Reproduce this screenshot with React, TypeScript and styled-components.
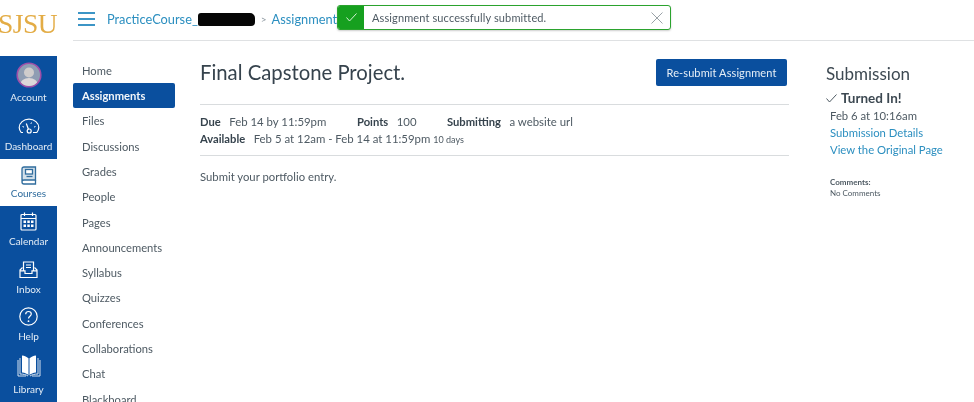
import { ReactNode } from "react";
import styled, { createGlobalStyle } from "styled-components";

const GlobalStyle = createGlobalStyle`
  html, body {
    margin: 0;
    padding: 0;
    background: #fff;
    font-family: Lato, "Open Sans", sans-serif;
    color: #2d3b45;
  }
  * { box-sizing: border-box; }
`;

const AccountIcon = () => (
  <svg width="26" height="26" viewBox="0 0 26 26">
    <defs>
      <clipPath id="avatar">
        <circle cx="13" cy="13" r="11" />
      </clipPath>
    </defs>
    <circle cx="13" cy="13" r="11.8" fill="#8f9db3" stroke="#a04fa8" strokeWidth="1.6" />
    <g clipPath="url(#avatar)">
      <circle cx="13" cy="10.5" r="5" fill="#cfcccc" />
      <ellipse cx="13" cy="23" rx="9" ry="7" fill="#dcd8d9" />
    </g>
  </svg>
);

const DashboardIcon = () => (
  <svg width="22" height="18" viewBox="0 0 22 18" fill="none" stroke="#fff" strokeWidth="1.2">
    <path d="M5 14.5H3.2C2 13 1.2 11.4 1.2 9.6 1.2 4.8 5.6 1.2 11 1.2s9.800 3.600 9.800 8.400c0 1.800-.8 3.400-2 4.900H15" />
    <path d="M8.300 5.500l2.200 6" />
    <circle cx="11.200" cy="13" r="2" />
    <path d="M4.500 8.500l1.500.6M17.500 8.500l-1.500.6M13.500 4.500l-.6 1.400" strokeWidth="1" />
  </svg>
);

const CoursesIcon = () => (
  <svg width="16" height="19" viewBox="0 0 16 19" fill="none" stroke="#2f6c9d" strokeWidth="1.300">
    <path d="M3 1h11.500v13H3C1.800 14 1 14.800 1 16V3c0-1.200.8-2 2-2z" fill="#d3e0ea" />
    <path d="M1 16c0 1.200.8 2 2 2h11.500v-4" />
    <rect x="4.500" y="3.500" width="7" height="4.500" fill="#fff" />
    <path d="M5.500 10.500h6" />
  </svg>
);

const CalendarIcon = () => (
  <svg width="17" height="19" viewBox="0 0 17 19" fill="none" stroke="#fff" strokeWidth="1.200">
    <rect x="1" y="2.500" width="15" height="15.500" rx="1" />
    <path d="M1 6.500h15M4.500 .5v3.500M12.500 .5v3.500" />
    <path
      d="M3.500 8.500h2.500v2.500h-2.500zM7.300 8.500h2.500v2.500h-2.500zM11 8.500h2.500v2.500h-2.500zM3.500 12.500h2.500v2.500h-2.500zM7.300 12.500h2.500v2.500h-2.500zM11 12.500h2.500v2.500h-2.500z"
      fill="#fff"
      stroke="none"
    />
  </svg>
);

const InboxIcon = () => (
  <svg width="19" height="18" viewBox="0 0 19 18" fill="none" stroke="#fff" strokeWidth="1.200">
    <path d="M4.500 10V1h10v9" />
    <path d="M7 4h5M7 6.500h5" />
    <path d="M3.500 6.500L1 9v7.500h17V9l-2.500-2.500" />
    <path d="M1 9.800h5v2.700h7V9.800h5" />
  </svg>
);

const HelpIcon = () => (
  <svg width="19" height="19" viewBox="0 0 19 19" fill="none" stroke="#fff" strokeWidth="1.200">
    <circle cx="9.500" cy="9.500" r="8.700" />
    <path d="M6.700 7.300c0-1.700 1.200-2.800 2.800-2.800s2.800 1 2.800 2.500c0 2.200-2.800 2.300-2.800 4.500" />
    <circle cx="9.500" cy="14.200" r=".9" fill="#fff" stroke="none" />
  </svg>
);

const LibraryIcon = () => (
  <svg width="24" height="22" viewBox="0 0 24 22">
    <path d="M12 4C10 1.800 7.500 .8 5 .5v17c2.800.3 5.200 1.300 7 3 1.800-1.700 4.200-2.700 7-3V.5c-2.500.3-5 1.300-7 3.500z" fill="#fff" />
    <path d="M12 4v16.500" stroke="#0a4f9e" strokeWidth="1" />
    <path d="M3 3v16c3 0 6 .6 8 2M21 3v16c-3 0-6 .6-8 2M1 5v16h8M23 5v16h-8" fill="none" stroke="#d5e2ef" strokeWidth="1" />
  </svg>
);

const Page = styled.div`
  display: grid;
  grid-template-columns: 57px 1fr;
  position: relative;
  width: 974px;
  height: 402px;
  overflow: hidden;
  filter: blur(0.35px);
`;

const Rail = styled.aside`
  display: flex;
  flex-direction: column;
`;

const Logo = styled.div`
  height: 56px;
  padding-top: 9px;
  font-family: "Liberation Serif", serif;
  font-size: 27.500px;
  line-height: 30px;
  color: #e3ac45;
  white-space: nowrap;
  text-indent: -2px;
  letter-spacing: -0.5px;
`;

const GlobalNav = styled.nav`
  flex: 1;
  display: flex;
  flex-direction: column;
  background: #0a4f9e;
`;

const GlobalItem = styled.a<{ $active?: boolean; $h: number; $top: number; $gap: number }>`
  display: flex;
  flex-direction: column;
  align-items: center;
  height: ${(p) => p.$h}px;
  padding-top: ${(p) => p.$top}px;
  gap: ${(p) => p.$gap}px;
  font-size: 10px;
  line-height: 12px;
  background: ${(p) => (p.$active ? "#fff" : "transparent")};
  color: ${(p) => (p.$active ? "#2f6c9d" : "#e4edf6")};

  svg {
    display: block;
    flex: none;
  }
`;

const Body = styled.div`
  display: flex;
  flex-direction: column;
  min-width: 0;
`;

const TopBar = styled.header`
  display: flex;
  align-items: center;
  height: 41px;
  margin-left: 16px;
  padding: 0 0 3px 5px;
  border-bottom: 1px solid #dfe1e3;
  font-size: 12.800px;
  color: #2c8fc0;
`;

const Burger = styled.span`
  display: flex;
  flex-direction: column;
  gap: 4px;
  width: 17px;
  margin-right: 12px;

  i {
    display: block;
    height: 2px;
    background: #3c95c6;
  }
`;

const Scribble = styled.span`
  display: inline-block;
  width: 57px;
  height: 13px;
  margin-top: 1px;
  background: #060606;
  border-radius: 3px 5px 4px 2px;
`;

const Crumb = styled.span`
  color: #8b969e;
  font-size: 10px;
  margin: 0 5px 0 6px;
`;

const Content = styled.div`
  flex: 1;
  display: flex;
  min-height: 0;
`;

const CourseNav = styled.nav`
  flex: none;
  width: 143px;
  padding: 16.800px 0 0 16px;
  overflow: hidden;
`;

const CourseLink = styled.a<{ $active?: boolean }>`
  display: block;
  width: 102px;
  height: 25.300px;
  padding-left: 9px;
  font-size: 11.200px;
  line-height: 25px;
  border-radius: 2px;
  white-space: nowrap;
  color: ${(p) => (p.$active ? "#f2f6fa" : "#4e5a63")};
  background: ${(p) => (p.$active ? "#0a4f9e" : "transparent")};
  font-weight: ${(p) => (p.$active ? 700 : 400)};
`;

const Main = styled.main`
  flex: none;
  width: 589px;
`;

const TitleRow = styled.div`
  display: flex;
  justify-content: space-between;
  align-items: flex-start;
  height: 64px;
  padding-top: 18px;
  border-bottom: 1px solid #d9dcde;
`;

const Title = styled.h1`
  margin: -1px 0 0;
  font-size: 20.300px;
  line-height: 28px;
  font-weight: 400;
  color: #36434d;
`;

const ResubmitButton = styled.button`
  width: 131px;
  height: 27px;
  margin-right: 2px;
  padding: 0;
  border: 0;
  border-radius: 2px;
  background: #0a4f9e;
  color: #e6eef6;
  font-family: inherit;
  font-size: 11px;
  letter-spacing: 0.1px;
`;

const Details = styled.div`
  padding: 8px 0 7px;
  border-bottom: 1px solid #d9dcde;
  font-size: 11.400px;
  line-height: 17px;
  color: #4e5a63;
`;

const DetailRow = styled.div`
  display: flex;
  white-space: nowrap;
`;

const Detail = styled.span<{ $w?: number }>`
  width: ${(p) => (p.$w ? `${p.$w}px` : "auto")};

  b {
    color: #36434d;
    font-size: 11.200px;
    margin-right: 8.500px;
  }

  small {
    font-size: 9px;
  }
`;

const Description = styled.p`
  margin: 13px 0 0;
  font-size: 11.300px;
  line-height: 15px;
  color: #4e5a63;
`;

const Sidebar = styled.aside`
  flex: none;
  margin-left: 37px;
  width: 140px;
  padding-top: 21px;
`;

const SideTitle = styled.h2`
  margin: 0 0 3px;
  font-size: 17px;
  line-height: 24px;
  font-weight: 400;
  color: #3d4952;
`;

const TurnedIn = styled.div`
  display: flex;
  align-items: center;
  gap: 4px;
  height: 18px;
  font-size: 13.500px;
  font-weight: 700;
  color: #3d4952;
`;

const SideLines = styled.div`
  padding-left: 4px;
  font-size: 11.300px;
  line-height: 17px;
  color: #4e5a63;
  white-space: nowrap;
`;

const SideLink = styled.a`
  display: block;
  color: #2c8fc0;
`;

const Comments = styled.div`
  margin-top: 19px;
  padding-left: 4px;
  font-size: 8px;
  line-height: 11px;
  color: #4e5a63;

  b {
    display: block;
  }
`;

const Toast = styled.div`
  position: absolute;
  left: 337px;
  top: 5px;
  display: flex;
  align-items: stretch;
  width: 334px;
  height: 25px;
  border: 1px solid #2ba32e;
  border-radius: 3px;
  background: #fff;
  box-shadow: 0 1px 2px rgba(0, 0, 0, 0.2);
  overflow: hidden;
`;

const ToastIcon = styled.span`
  flex: none;
  display: flex;
  align-items: center;
  justify-content: center;
  width: 26px;
  background: #16a01f;
`;

const ToastText = styled.span`
  flex: 1;
  padding-left: 8px;
  font-size: 11px;
  line-height: 23px;
  letter-spacing: 0.12px;
  color: #4e5a63;
`;

const ToastClose = styled.span`
  flex: none;
  display: flex;
  align-items: center;
  width: 19px;
`;

const courseLinks = [
  "Home",
  "Assignments",
  "Files",
  "Discussions",
  "Grades",
  "People",
  "Pages",
  "Announcements",
  "Syllabus",
  "Quizzes",
  "Conferences",
  "Collaborations",
  "Chat",
  "Blackboard",
];

const globalLinks: { label: string; icon: ReactNode; h: number; top: number; gap: number; active?: boolean }[] = [
  { label: "Account", icon: <AccountIcon />, h: 55, top: 6, gap: 3 },
  { label: "Dashboard", icon: <DashboardIcon />, h: 48, top: 7, gap: 4 },
  { label: "Courses", icon: <CoursesIcon />, h: 47, top: 7, gap: 2, active: true },
  { label: "Calendar", icon: <CalendarIcon />, h: 48, top: 6, gap: 4 },
  { label: "Inbox", icon: <InboxIcon />, h: 47, top: 7, gap: 4 },
  { label: "Help", icon: <HelpIcon />, h: 47, top: 6, gap: 4 },
  { label: "Library", icon: <LibraryIcon />, h: 54, top: 7, gap: 6 },
];

const App = () => {
  return (
    <Page>
      <GlobalStyle />
      <Rail>
        <Logo>SJSU</Logo>
        <GlobalNav>
          {globalLinks.map((link) => (
            <GlobalItem key={link.label} $active={link.active} $h={link.h} $top={link.top} $gap={link.gap}>
              {link.icon}
              {link.label}
            </GlobalItem>
          ))}
        </GlobalNav>
      </Rail>
      <Body>
        <TopBar>
          <Burger>
            <i />
            <i />
            <i />
          </Burger>
          PracticeCourse_
          <Scribble />
          <Crumb>&gt;</Crumb>
          Assignments
        </TopBar>
        <Content>
          <CourseNav>
            {courseLinks.map((name) => (
              <CourseLink key={name} $active={name === "Assignments"}>
                {name}
              </CourseLink>
            ))}
          </CourseNav>
          <Main>
            <TitleRow>
              <Title>Final Capstone Project.</Title>
              <ResubmitButton>Re-submit Assignment</ResubmitButton>
            </TitleRow>
            <Details>
              <DetailRow>
                <Detail $w={157}>
                  <b>Due</b>Feb 14 by 11:59pm
                </Detail>
                <Detail $w={90}>
                  <b>Points</b>100
                </Detail>
                <Detail>
                  <b>Submitting</b>a website url
                </Detail>
              </DetailRow>
              <DetailRow>
                <Detail>
                  <b>Available</b>Feb 5 at 12am - Feb 14 at 11:59pm <small>10 days</small>
                </Detail>
              </DetailRow>
            </Details>
            <Description>Submit your portfolio entry.</Description>
          </Main>
          <Sidebar>
            <SideTitle>Submission</SideTitle>
            <TurnedIn>
              <svg width="11" height="9" viewBox="0 0 11 9" fill="none" stroke="#4e5a63" strokeWidth="1">
                <path d="M.5 4.500l3 3.500L10.500 .5" />
              </svg>
              Turned In!
            </TurnedIn>
            <SideLines>
              Feb 6 at 10:16am
              <SideLink>Submission Details</SideLink>
              <SideLink>View the Original Page</SideLink>
            </SideLines>
            <Comments>
              <b>Comments:</b>
              No Comments
            </Comments>
          </Sidebar>
        </Content>
      </Body>
      <Toast>
        <ToastIcon>
          <svg width="11" height="9" viewBox="0 0 11 9" fill="none" stroke="#d5f0d6" strokeWidth="1">
            <path d="M.5 4.500l3 3.500L10.500 .5" />
          </svg>
        </ToastIcon>
        <ToastText>Assignment successfully submitted.</ToastText>
        <ToastClose>
          <svg width="12" height="12" viewBox="0 0 12 12" stroke="#8f979d" strokeWidth="0.9">
            <path d="M.5 .5l11 11M11.500 .5l-11 11" />
          </svg>
        </ToastClose>
      </Toast>
    </Page>
  );
};

export default App;
